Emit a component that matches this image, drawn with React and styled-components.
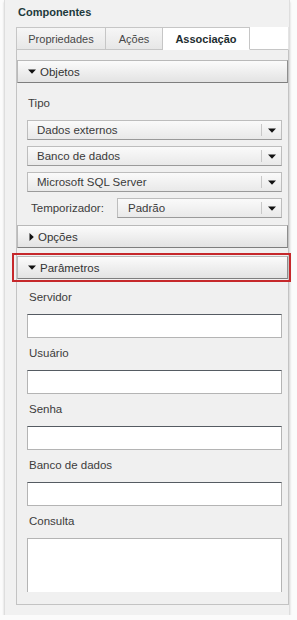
import styled, { createGlobalStyle } from "styled-components";

const GlobalStyle = createGlobalStyle`
  body {
    margin: 0;
    background: #fbfbfb;
    font-family: "Liberation Sans", Arial, sans-serif;
    font-size: 11px;
    color: #3a3a3a;
  }
`;

const Panel = styled.div`
  margin-left: 4px;
  width: 286px;
  height: 615px;
  background: #f1f1f1;
  border-left: 1px solid #dedede;
  border-right: 1px solid #dedede;
  box-shadow: 0 2px 2px rgba(0, 0, 0, 0.18);
  box-sizing: border-box;
`;

const Title = styled.div`
  height: 27px;
  line-height: 24px;
  padding-left: 13px;
  font-weight: bold;
  font-size: 11px;
  color: #1d3a3c;
`;

const Tabs = styled.div`
  display: flex;
  margin-left: 11px;
  width: 273px;
  height: 23px;
`;

const Tab = styled.div`
  width: ${(p) => p.w}px;
  box-sizing: border-box;
  text-align: center;
  line-height: 22px;
  border: 1px solid #c6c6c6;
  border-left-width: ${(p) => (p.first ? 1 : 0)}px;
  border-bottom-color: ${(p) => (p.active ? "#fff" : "#c6c6c6")};
  background: ${(p) =>
    p.active ? "#fff" : "linear-gradient(#f6f6f6, #e7e7e7)"};
  font-weight: ${(p) => (p.active ? "bold" : "normal")};
  color: ${(p) => (p.active ? "#1d2d30" : "#484848")};
`;

const TabFill = styled.div`
  flex: 1;
  background: #fff;
  border-bottom: 1px solid #c6c6c6;
  border-right: 1px solid #e4e4e4;
`;

const Box = styled.div`
  margin-left: 11px;
  width: 273px;
  height: 555px;
  box-sizing: border-box;
  border: 1px solid #c3c3c3;
  border-top: none;
  background: #f0f0f0;
  padding-top: 10px;
`;

const Header = styled.div`
  height: 23px;
  box-sizing: border-box;
  display: flex;
  align-items: center;
  gap: 4px;
  padding-left: ${(p) => (p.closed ? 11 : 10)}px;
  border: 1px solid #b9b9b9;
  border-right-color: #8e8e8e;
  border-bottom-color: #7e7e7e;
  background: linear-gradient(#fbfbfb, #e3e3e3);
  color: #333;
  font-size: 11.5px;
`;

const Section = styled.div`
  padding: 0 6px 0 10px;
`;

const Label = styled.div`
  line-height: 14px;
  padding: ${(p) => p.top || 8}px 0 10px ${(p) => p.indent || 1}px;
  font-size: 11.5px;
  color: #3c3c3c;
`;

const Selects = styled.div`
  display: flex;
  flex-direction: column;
  gap: 6px;
  padding-bottom: 7px;
`;

const SelectBox = styled.div`
  flex: 1;
  height: 20px;
  box-sizing: border-box;
  display: flex;
  align-items: stretch;
  border: 1px solid #bdbdbd;
  border-bottom-color: #9a9a9a;
  background: linear-gradient(#fafafa, #e9e9e9);
  color: #3a3a3a;
  font-size: 11.5px;
`;

const SelectText = styled.div`
  flex: 1;
  line-height: 18px;
  padding-left: ${(p) => p.pad || 9}px;
`;

const SelectArrow = styled.div`
  width: 19px;
  display: flex;
  align-items: center;
  justify-content: center;
  border-left: 1px solid #c8c8c8;
  margin: 3px 0;
`;

const TimerRow = styled.div`
  display: flex;
  align-items: center;
  gap: 14px;
`;

const TimerLabel = styled.div`
  width: 72px;
  padding-left: 4px;
  font-size: 11.5px;
  color: #3c3c3c;
`;

const Highlight = styled.div`
  margin: 5px -3px 0 -5px;
  padding: 1px 1px 1px 3px;
  border: 2px solid #c6282b;
`;

const Input = styled.div`
  height: 24px;
  box-sizing: border-box;
  background: #fff;
  border: 1px solid #b4b4b4;
  border-top-color: #555b62;
`;

const TextArea = styled.div`
  height: 54px;
  box-sizing: border-box;
  background: #fff;
  border: 1px solid #b4b4b4;
  border-bottom: none;
`;

const Triangle = ({ dir = "down", size = 8 }) =>
  dir === "down" ? (
    <svg width={size} height={size / 2 + 1} viewBox="0 0 8 5">
      <path d="M0 0.5 L8 0.5 L4 4.8 Z" fill="#111" />
    </svg>
  ) : (
    <svg width="5" height="8" viewBox="0 0 5 8">
      <path d="M0.5 0 L4.8 4 L0.5 8 Z" fill="#111" />
    </svg>
  );

const Select = ({ value, pad }) => (
  <SelectBox>
    <SelectText pad={pad}>{value}</SelectText>
    <SelectArrow>
      <Triangle size={8} />
    </SelectArrow>
  </SelectBox>
);

const fields = ["Servidor", "Usuário", "Senha", "Banco de dados"];

export default function App() {
  return (
    <>
      <GlobalStyle />
      <Panel>
        <Title>Componentes</Title>
        <Tabs>
          <Tab w={90} first>Propriedades</Tab>
          <Tab w={57}>Ações</Tab>
          <Tab w={87} active>Associação</Tab>
          <TabFill />
        </Tabs>
        <Box>
          <Header>
            <Triangle />
            Objetos
          </Header>
          <Section>
            <Label top={13}>Tipo</Label>
            <Selects>
              <Select value="Dados externos" />
              <Select value="Banco de dados" />
              <Select value="Microsoft SQL Server" />
              <TimerRow>
                <TimerLabel>Temporizador:</TimerLabel>
                <Select value="Padrão" pad={10} />
              </TimerRow>
            </Selects>
          </Section>
          <Header closed>
            <Triangle dir="right" />
            Opções
          </Header>
          <Highlight>
            <Header>
              <Triangle />
              Parâmetros
            </Header>
          </Highlight>
          <Section>
            {fields.map((f, i) => (
              <div key={f}>
                <Label top={i === 0 ? 8 : 8} indent={2}>{f}</Label>
                <Input />
              </div>
            ))}
            <Label indent={2}>Consulta</Label>
            <TextArea />
          </Section>
        </Box>
      </Panel>
    </>
  );
}
